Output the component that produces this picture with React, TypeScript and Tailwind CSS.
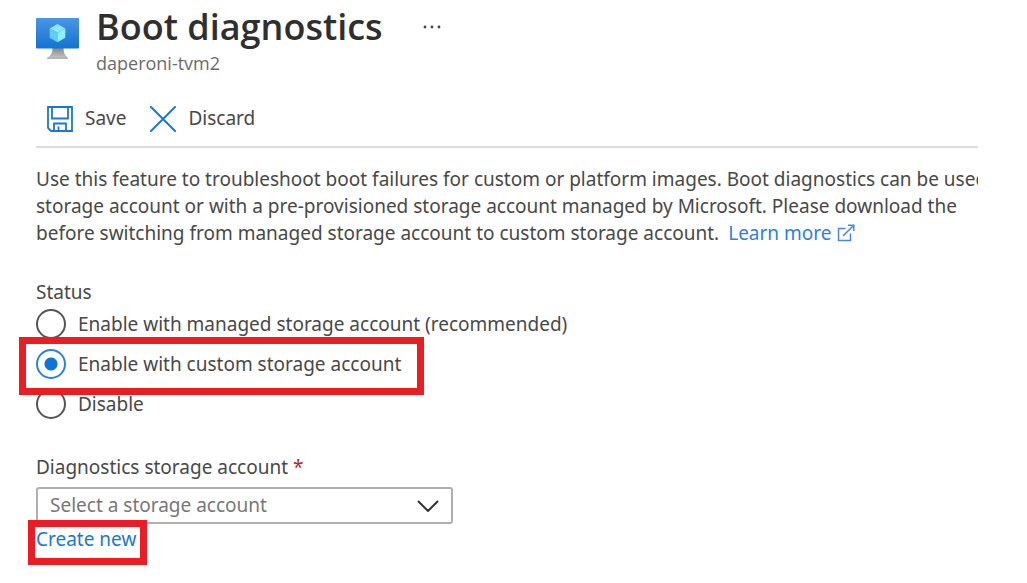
import { useState } from "react";

const OPTIONS = [
  { id: "managed", label: "Enable with managed storage account (recommended)" },
  { id: "custom", label: "Enable with custom storage account" },
  { id: "disable", label: "Disable" },
];

function MonitorIcon() {
  return (
    <svg viewBox="0 0 44 44" className="h-11 w-11 shrink-0" aria-hidden="true">
      <defs>
        <linearGradient id="screen" x1="0" y1="1" x2="0" y2="0">
          <stop offset="0" stopColor="#1273d0" />
          <stop offset="1" stopColor="#4b95e6" />
        </linearGradient>
        <linearGradient id="stand" x1="0" y1="1" x2="0" y2="0">
          <stop offset="0" stopColor="#c2c2c2" />
          <stop offset="1" stopColor="#7f7f7f" />
        </linearGradient>
      </defs>
      <path d="M16.5 31h11c0 5.500 1 8 4.500 10.500h-20c3.500-2.500 4.500-5 4.500-10.500Z" fill="url(#stand)" />
      <path d="M11 42.500q0-1.500 1.500-1.500h18q1.500 0 1.500 1.500v.5H11Z" fill="#b5b5b5" />
      <rect x="0" y="2" width="43" height="30.500" rx="1" fill="url(#screen)" />
      <path d="M21.500 8l7.800 4.500-7.800 4.500-7.800-4.500Z" fill="#8fe4f7" />
      <path d="M13.700 12.500l7.800 4.500v9.300l-7.800-4.500Z" fill="#62cdf4" />
      <path d="M29.300 12.500l-7.800 4.500v9.300l7.800-4.500Z" fill="#8ef0fb" />
    </svg>
  );
}

function SaveIcon() {
  return (
    <svg viewBox="0 0 26 26" className="h-[26px] w-[26px]" fill="none" stroke="#1b78cf" strokeWidth="1.8" aria-hidden="true">
      <path d="M1 1h24v24H4l-3-3Z" />
      <path d="M5 1v11.500h16V1" />
      <path d="M7 25v-7.500h12V25" />
      <path d="M11.500 25v-4.500" />
    </svg>
  );
}

function DiscardIcon() {
  return (
    <svg viewBox="0 0 26 26" className="h-[26px] w-[26px]" fill="none" stroke="#1b78cf" strokeWidth="2" strokeLinecap="round" aria-hidden="true">
      <path d="M1 1l24 24M25 1L1 25" />
    </svg>
  );
}

function ExternalIcon() {
  return (
    <svg viewBox="0 0 18 18" className="ml-[6px] inline h-[18px] w-[18px] align-[-2px]" fill="none" stroke="#4a86e0" strokeWidth="1.5" aria-hidden="true">
      <path d="M8.500 4.500H1.500v12h12V9.500" />
      <path d="M6 12L16.500 1.500M11 1.200h5.800V7" />
    </svg>
  );
}

export default function App() {
  const [status, setStatus] = useState("custom");

  return (
    <main className="min-h-screen bg-white pr-[49px] pb-4 pl-9 font-['Noto_Sans','Open_Sans',sans-serif] text-[19px] leading-[27px] text-[#484848]">
      <header className="flex pt-4 font-['Open_Sans','Noto_Sans',sans-serif]">
        <MonitorIcon />
        <div className="-mt-3 ml-4">
          <div className="flex items-center gap-10">
            <h1 className="text-[36px] leading-[46px] font-semibold text-[#2f2f2f]">Boot diagnostics</h1>
            <button type="button" aria-label="More actions" className="py-2">
              <svg viewBox="0 0 18 4" className="h-1 w-[18px]" fill="#444444" aria-hidden="true">
                <circle cx="2" cy="2" r="1.400" />
                <circle cx="9" cy="2" r="1.400" />
                <circle cx="16" cy="2" r="1.400" />
              </svg>
            </button>
          </div>
          <p className="text-[18px] text-[#6b6b6b]">daperoni-tvm2</p>
        </div>
      </header>

      <div className="mt-4 flex gap-6 border-b-2 border-[#dcdcdc] pt-3 pb-[14px] pl-[11px]">
        <button type="button" className="flex items-center gap-3">
          <SaveIcon />
          Save
        </button>
        <button type="button" className="flex items-center gap-3">
          <DiscardIcon />
          Discard
        </button>
      </div>

      <p className="mt-[18px] overflow-hidden whitespace-nowrap">
        Use this feature to troubleshoot boot failures for custom or platform images. Boot diagnostics can be used
        <br />
        storage account or with a pre-provisioned storage account managed by Microsoft. Please download the
        <br />
        before switching from managed storage account to custom storage account.{" "}
        <a href="#learn-more" className="ml-1 text-[#2f80dc]">
          Learn more
          <ExternalIcon />
        </a>
      </p>

      <fieldset className="mt-[33px]">
        <legend className="leading-6">Status</legend>
        {OPTIONS.map((option) => (
          <div key={option.id} className="relative flex h-10 w-fit items-center gap-3">
            <input
              type="radio"
              id={option.id}
              name="status"
              checked={status === option.id}
              onChange={() => setStatus(option.id)}
              className="h-[30px] w-[30px] appearance-none rounded-full border-2 border-[#555555] bg-white checked:border-[#2b83d8] checked:bg-[radial-gradient(circle,#0f74d2_6px,#ffffff_7px)]"
            />
            <label htmlFor={option.id}>{option.label}</label>
            {option.id === "custom" && (
              <span className="pointer-events-none absolute -top-[7px] -right-[23px] -bottom-[11px] -left-[17px] z-10 border-[7px] border-[#ec1c24]" />
            )}
          </div>
        ))}
      </fieldset>

      <div className="mt-[30px] w-[417px] max-w-full">
        <label htmlFor="account" className="block">
          Diagnostics storage account <span className="text-[#b3262c]">*</span>
        </label>
        <div className="relative mt-[6px]">
          <select
            id="account"
            defaultValue=""
            className="block h-[37px] w-full appearance-none rounded-[3px] border-2 border-[#b0b0b0] bg-white pl-3 text-[#777777]"
          >
            <option value="">Select a storage account</option>
          </select>
          <svg viewBox="0 0 22 12" className="pointer-events-none absolute top-[13px] right-[14px] h-3 w-[22px]" fill="none" stroke="#333333" strokeWidth="2" aria-hidden="true">
            <path d="M1 1l10 10L21 1" />
          </svg>
        </div>
        <div className="relative mt-0.5 w-fit">
          <a href="#create-new" className="block text-[#1b78cf]">
            Create new
          </a>
          <span className="pointer-events-none absolute -top-[6px] -right-[11px] -bottom-3 -left-2 border-[7px] border-[#ec1c24]" />
        </div>
      </div>
    </main>
  );
}
